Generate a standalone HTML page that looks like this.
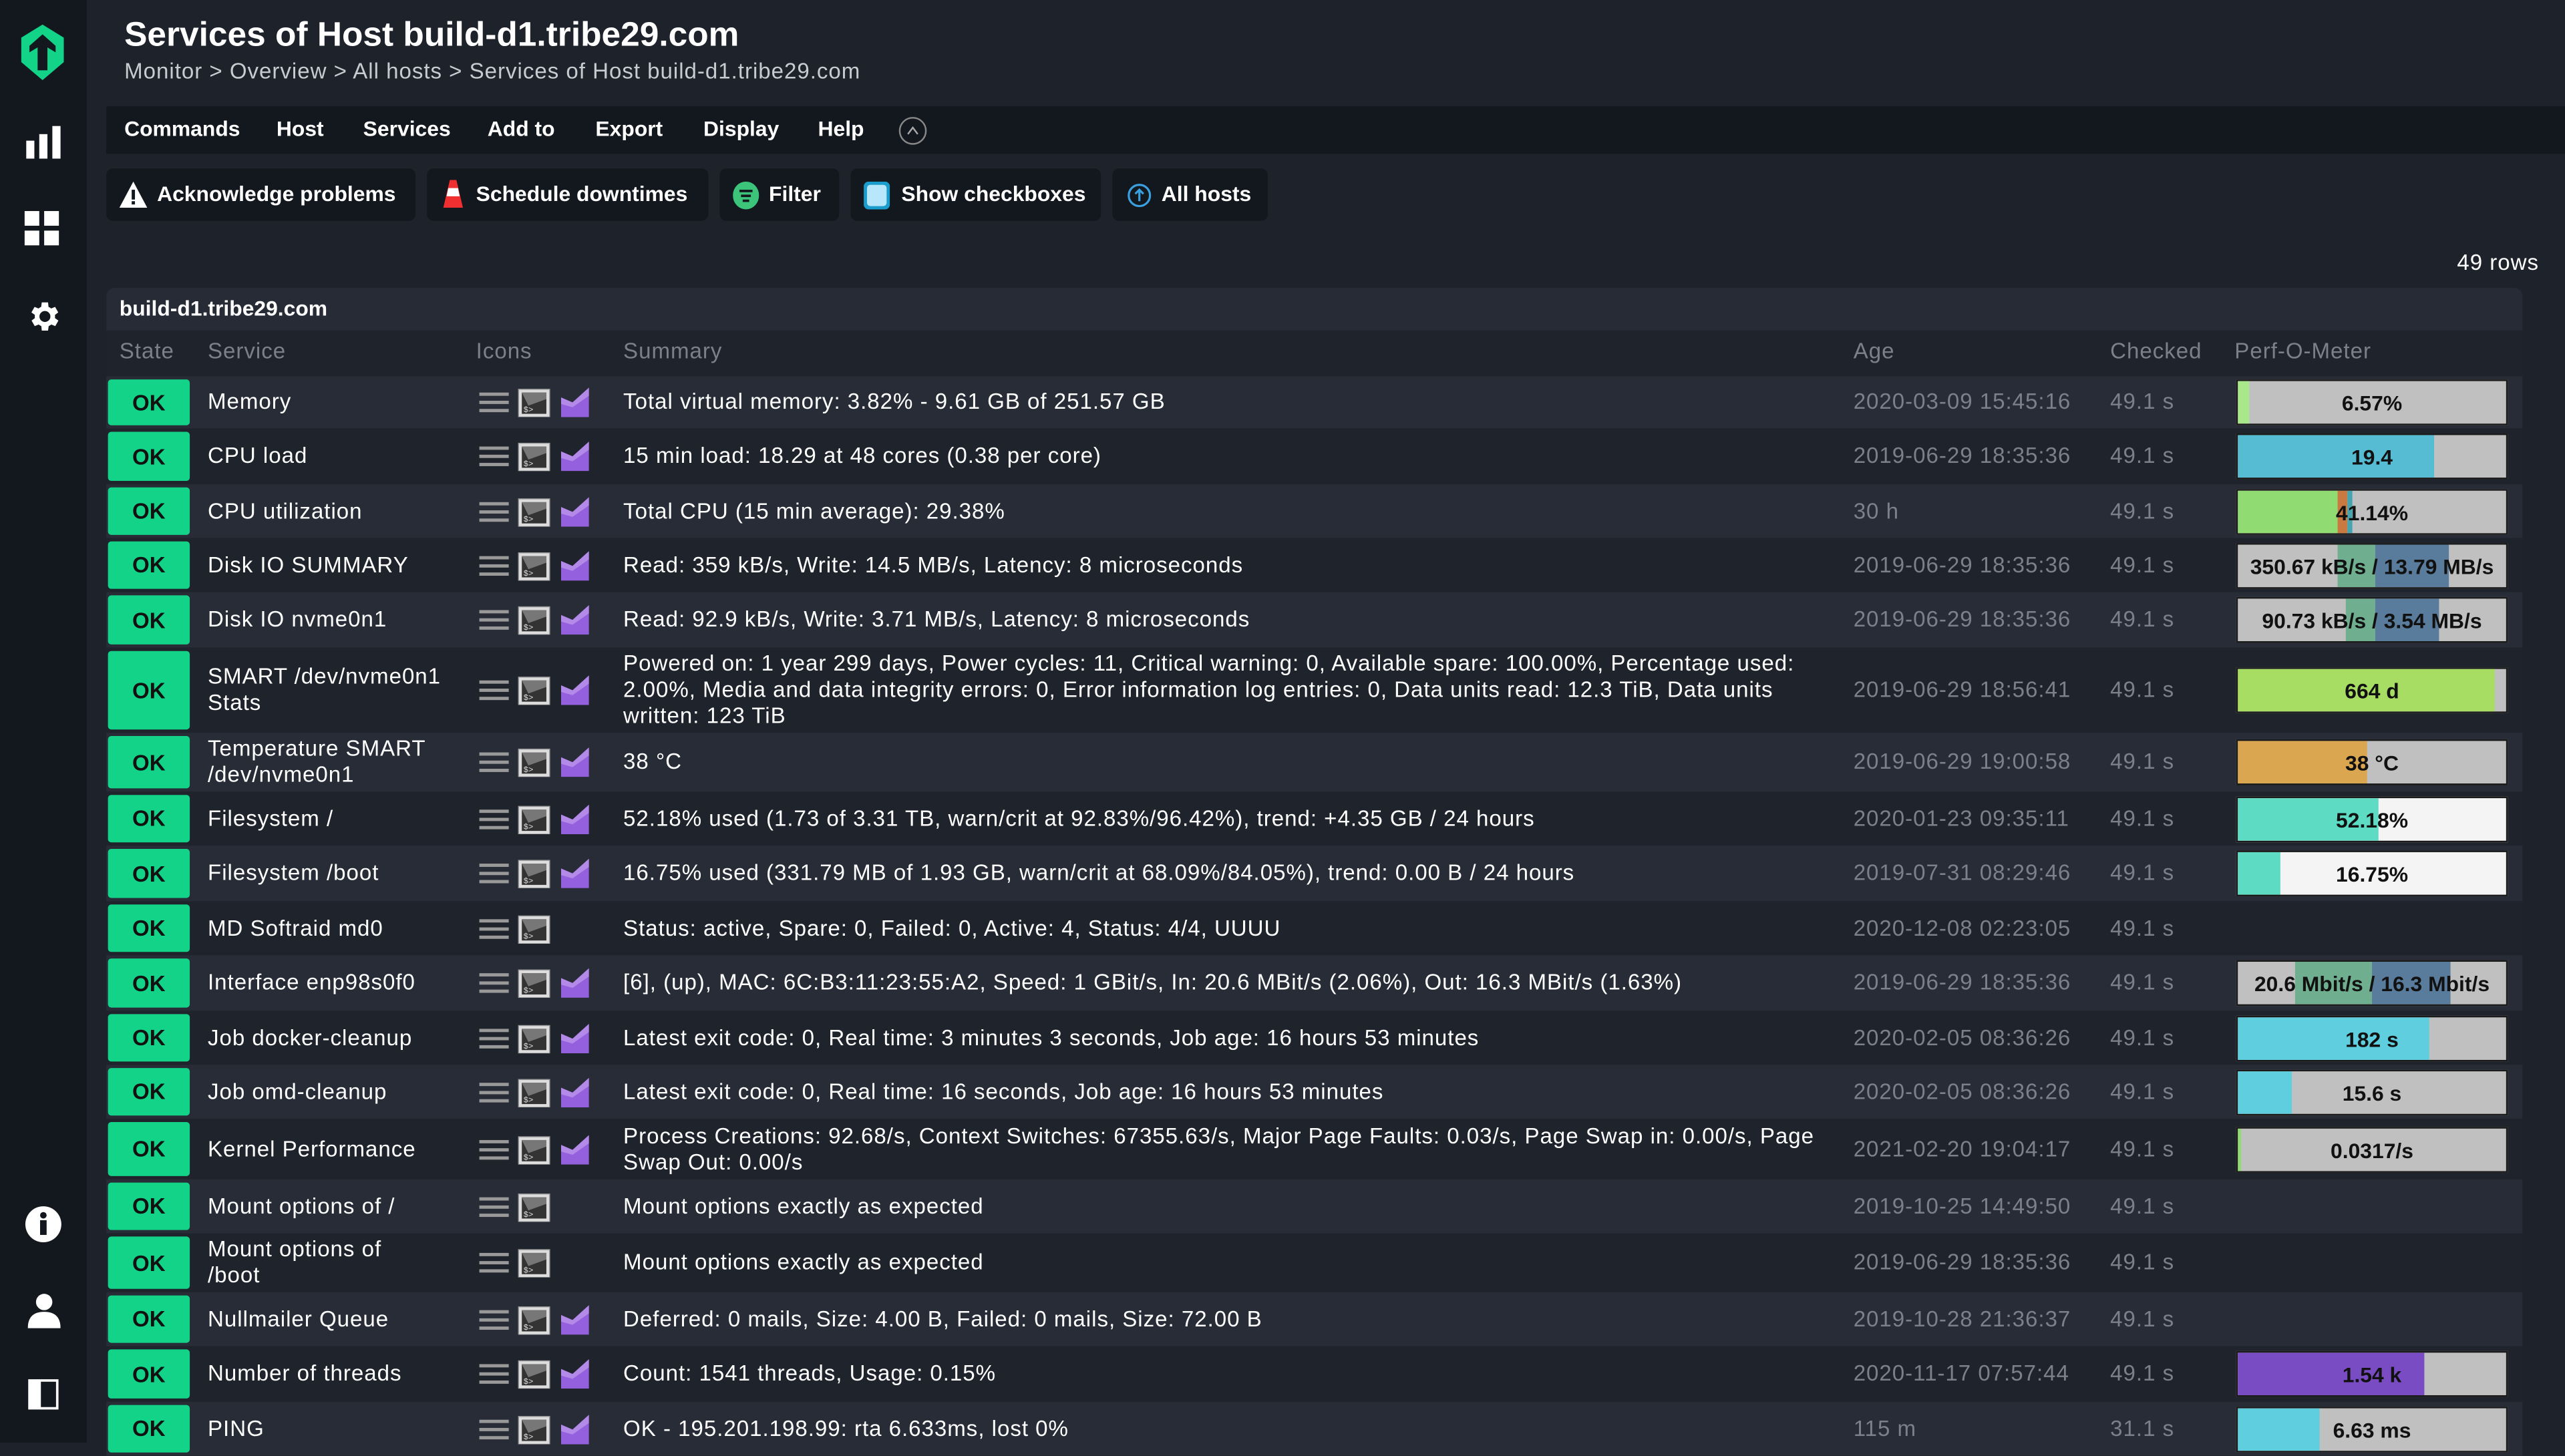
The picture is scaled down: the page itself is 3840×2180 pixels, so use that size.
<!DOCTYPE html>
<html><head><meta charset="utf-8"><style>
*{box-sizing:border-box;margin:0;padding:0}
html,body{width:3840px;height:2160px;overflow:hidden;background:#1e222a}
#w{position:absolute;left:0;top:0;width:1568px;height:882px;transform:scale(2.44898);transform-origin:0 0;font-family:"Liberation Sans",sans-serif;color:#fff;background:#1e222a;font-size:13px}
.a{position:absolute}
#side{left:0;top:0;width:53px;height:882px;background:#13171e}
.t{white-space:nowrap}
.sp{font-size:13.5px;letter-spacing:.4px}
.menu{left:65px;top:65px;width:1503px;height:29px;background:#13171e}
.menu span{position:absolute;top:6px;font-weight:bold;font-size:13px}
.btn{top:103px;height:32px;background:#13171e;border-radius:4px;font-weight:bold;font-size:13px}
.btn span{position:absolute;top:8px}
.row{left:65px;width:1477px}
.ok{position:absolute;left:1px;top:2px;bottom:2px;width:50px;background:#13d389;border-radius:2px;color:#111;font-weight:bold;display:flex;align-items:center;justify-content:center;font-size:13.5px}
.cell{position:absolute;top:0;bottom:0;display:flex;align-items:center;line-height:16px;font-size:13.5px;letter-spacing:.4px;white-space:nowrap}
.age{color:#7b808a}
.bar{position:absolute;left:1302px;width:166px;height:28px;background:#c0c0c0;border:1px solid #1a1a1a;overflow:hidden}
.bar div{position:absolute;top:0;bottom:0}
.bar b{position:absolute;left:0;right:0;top:6px;text-align:center;color:#111;font-size:13px;font-weight:bold;white-space:nowrap}
.ic{position:absolute;left:228px;top:50%;margin-top:-9px;width:68px;height:18px}
</style></head><body><div id="w">
<div id="side" class="a">
<svg class="a" style="left:12px;top:14px" width="28" height="36" viewBox="0 0 28 36"><path d="M14 1 L27 9 L27 24 L14 35 L1 24 L1 9Z" fill="#13d389"/><path d="M14 7 L22 14 L22 18 L17 15 L17 29 L11 29 L11 15 L6 18 L6 14Z" fill="#13171e"/></svg>
<svg class="a" style="left:16px;top:77px" width="22" height="20"><rect x="0" y="9" width="5" height="11" fill="#fff"/><rect x="8" y="5" width="5" height="15" fill="#fff"/><rect x="16" y="0" width="5" height="20" fill="#fff"/></svg>
<svg class="a" style="left:15px;top:129px" width="22" height="22"><rect x="0" y="0" width="9" height="9" fill="#fff"/><rect x="12" y="0" width="9" height="9" fill="#fff"/><rect x="0" y="12" width="9" height="9" fill="#fff"/><rect x="12" y="12" width="9" height="9" fill="#fff"/></svg>
<svg class="a" style="left:15px;top:182px" width="23" height="23" viewBox="0 0 24 24"><path fill="#fff" d="M19.4 13a7.5 7.5 0 0 0 0-2l2.1-1.6-2-3.5-2.5 1a7 7 0 0 0-1.7-1L15 3h-4l-.4 2.9a7 7 0 0 0-1.7 1l-2.5-1-2 3.5L6.6 11a7.5 7.5 0 0 0 0 2l-2.1 1.6 2 3.5 2.5-1a7 7 0 0 0 1.7 1L11 21h4l.4-2.9a7 7 0 0 0 1.7-1l2.5 1 2-3.5zM13 15.5a3.5 3.5 0 1 1 0-7 3.5 3.5 0 0 1 0 7z"/></svg>
<svg class="a" style="left:15px;top:737px" width="23" height="23"><circle cx="11.5" cy="11.5" r="11" fill="#fff"/><circle cx="11.5" cy="6" r="2" fill="#13171e"/><rect x="9.5" y="9" width="4" height="9" fill="#13171e"/></svg>
<svg class="a" style="left:17px;top:790px" width="20" height="23"><circle cx="10" cy="6" r="5" fill="#fff"/><path d="M0 22 Q0 12 10 12 Q20 12 20 22Z" fill="#fff"/></svg>
<svg class="a" style="left:17px;top:843px" width="19" height="19"><rect x="1" y="1" width="17" height="17" fill="none" stroke="#fff" stroke-width="1.5"/><rect x="1" y="1" width="7" height="17" fill="#fff"/></svg>
</div>
<div class="a t" style="left:76px;top:10px;font-size:21px;font-weight:bold">Services of Host build-d1.tribe29.com</div>
<div class="a t sp" style="left:76px;top:36px;color:#c8cbd0">Monitor &gt; Overview &gt; All hosts &gt; Services of Host build-d1.tribe29.com</div>
<div class="a menu"><span style="left:11px">Commands</span><span style="left:104px">Host</span><span style="left:157px">Services</span><span style="left:233px">Add to</span><span style="left:299px">Export</span><span style="left:365px">Display</span><span style="left:435px">Help</span>
<svg class="a" style="left:484px;top:6px" width="18" height="18"><circle cx="9" cy="9" r="8" fill="none" stroke="#888" stroke-width="1"/><path d="M6 11 L9 7 L12 11" fill="none" stroke="#aaa"/></svg></div>
<div class="a btn" style="left:65px;width:189px"><svg class="a" style="left:8px;top:8px" width="17" height="17"><path d="M8.5 0 L17 16 L0 16Z" fill="#fff"/><rect x="7.5" y="5" width="2" height="6" fill="#13171e"/><rect x="7.5" y="12" width="2" height="2" fill="#13171e"/></svg><span style="left:31px">Acknowledge problems</span></div>
<div class="a btn" style="left:261px;width:172px"><svg class="a" style="left:9px;top:7px" width="14" height="18"><path d="M5 0 L9 0 L13 17 L1 17Z" fill="#f03030"/><path d="M4 5 L10 5 L11 10 L3 10Z" fill="#fff"/></svg><span style="left:30px">Schedule downtimes</span></div>
<div class="a btn" style="left:440px;width:73px"><svg class="a" style="left:8px;top:8px" width="16" height="17"><ellipse cx="8" cy="8.5" rx="8" ry="8.5" fill="#3cc47a"/><rect x="4" y="5" width="8" height="1.5" fill="#13171e"/><rect x="5" y="8" width="6" height="1.5" fill="#13171e"/><rect x="6" y="11" width="4" height="1.5" fill="#13171e"/></svg><span style="left:30px">Filter</span></div>
<div class="a btn" style="left:520px;width:153px"><svg class="a" style="left:8px;top:8px" width="16" height="17"><rect x="0" y="0" width="16" height="17" rx="3" fill="#1a9ccc"/><rect x="2" y="2" width="12" height="13" rx="2" fill="#b8e6fa"/></svg><span style="left:31px">Show checkboxes</span></div>
<div class="a btn" style="left:680px;width:95px"><svg class="a" style="left:9px;top:9px" width="15" height="15"><circle cx="7.5" cy="7.5" r="6.5" fill="none" stroke="#3aa0e0" stroke-width="1.3"/><path d="M7.5 11 L7.5 4 M5 6.5 L7.5 4 L10 6.5" stroke="#3aa0e0" fill="none" stroke-width="1.3"/></svg><span style="left:30px">All hosts</span></div>
<div class="a t sp" style="left:1502px;top:153px">49 rows</div>
<div class="a" style="left:65px;top:176px;width:1477px;height:26px;background:#262b35;border-radius:5px 5px 0 0"></div>
<div class="a t" style="left:73px;top:181px;font-weight:bold;font-size:13px">build-d1.tribe29.com</div>
<div class="a" style="left:65px;top:202px;width:1477px;height:28px;background:#1f232b"></div>
<div class="a t sp" style="left:73px;top:207px;color:#7b808a">State</div>
<div class="a t sp" style="left:127px;top:207px;color:#7b808a">Service</div>
<div class="a t sp" style="left:291px;top:207px;color:#7b808a">Icons</div>
<div class="a t sp" style="left:381px;top:207px;color:#7b808a">Summary</div>
<div class="a t sp" style="left:1133px;top:207px;color:#7b808a">Age</div>
<div class="a t sp" style="left:1290px;top:207px;color:#7b808a">Checked</div>
<div class="a t sp" style="left:1366px;top:207px;color:#7b808a">Perf-O-Meter</div>
<div id="rows"></div>
</div>
<script>
var R=[
[230,32,"Memory","Total virtual memory: 3.82% - 9.61 GB of 251.57 GB","2020-03-09 15:45:16",1,[["#a8e88a",0,7]],"6.57%",0],
[262,34,"CPU load","15 min load: 18.29 at 48 cores (0.38 per core)","2019-06-29 18:35:36",1,[["#55bcd4",0,120]],"19.4",0],
[296,33,"CPU utilization","Total CPU (15 min average): 29.38%","30 h",1,[["#90dc73",0,61],["#c87a40",61,6],["#46a4b0",67,3]],"41.14%",0],
[329,33,"Disk IO SUMMARY","Read: 359 kB/s, Write: 14.5 MB/s, Latency: 8 microseconds","2019-06-29 18:35:36",1,[["#6fae8f",61,23],["#5a7c9c",84,45]],"350.67 kB/s / 13.79 MB/s",0],
[362,34,"Disk IO nvme0n1","Read: 92.9 kB/s, Write: 3.71 MB/s, Latency: 8 microseconds","2019-06-29 18:35:36",1,[["#6fae8f",66,18],["#5a7c9c",84,39]],"90.73 kB/s / 3.54 MB/s",0],
[396,52,"SMART /dev/nvme0n1<br>Stats","Powered on: 1 year 299 days, Power cycles: 11, Critical warning: 0, Available spare: 100.00%, Percentage used:<br>2.00%, Media and data integrity errors: 0, Error information log entries: 0, Data units read: 12.3 TiB, Data units<br>written: 123 TiB","2019-06-29 18:56:41",1,[["#a6dd62",0,157]],"664 d",0],
[448,36,"Temperature SMART<br>/dev/nvme0n1","38 °C","2019-06-29 19:00:58",1,[["#dba650",0,79]],"38 °C",0],
[484,33,"Filesystem /","52.18% used (1.73 of 3.31 TB, warn/crit at 92.83%/96.42%), trend: +4.35 GB / 24 hours","2020-01-23 09:35:11",1,[["#5ddcc3",0,86]],"52.18%",1],
[517,34,"Filesystem /boot","16.75% used (331.79 MB of 1.93 GB, warn/crit at 68.09%/84.05%), trend: 0.00 B / 24 hours","2019-07-31 08:29:46",1,[["#5ddcc3",0,26]],"16.75%",1],
[551,33,"MD Softraid md0","Status: active, Spare: 0, Failed: 0, Active: 4, Status: 4/4, UUUU","2020-12-08 02:23:05",0,null],
[584,34,"Interface enp98s0f0","[6], (up), MAC: 6C:B3:11:23:55:A2, Speed: 1 GBit/s, In: 20.6 MBit/s (2.06%), Out: 16.3 MBit/s (1.63%)","2019-06-29 18:35:36",1,[["#6fae8f",35,47],["#5a7c9c",82,48]],"20.6 Mbit/s / 16.3 Mbit/s",0],
[618,33,"Job docker-cleanup","Latest exit code: 0, Real time: 3 minutes 3 seconds, Job age: 16 hours 53 minutes","2020-02-05 08:36:26",1,[["#5fcfe0",0,117]],"182 s",0],
[651,33,"Job omd-cleanup","Latest exit code: 0, Real time: 16 seconds, Job age: 16 hours 53 minutes","2020-02-05 08:36:26",1,[["#5fcfe0",0,33]],"15.6 s",0],
[684,37,"Kernel Performance","Process Creations: 92.68/s, Context Switches: 67355.63/s, Major Page Faults: 0.03/s, Page Swap in: 0.00/s, Page<br>Swap Out: 0.00/s","2021-02-20 19:04:17",1,[["#90dc73",0,2]],"0.0317/s",0],
[721,33,"Mount options of /","Mount options exactly as expected","2019-10-25 14:49:50",0,null],
[754,36,"Mount options of<br>/boot","Mount options exactly as expected","2019-06-29 18:35:36",0,null],
[790,33,"Nullmailer Queue","Deferred: 0 mails, Size: 4.00 B, Failed: 0 mails, Size: 72.00 B","2019-10-28 21:36:37",1,null],
[823,34,"Number of threads","Count: 1541 threads, Usage: 0.15%","2020-11-17 07:57:44",1,[["#7a4cc4",0,114]],"1.54 k",0],
[857,33,"PING","OK - 195.201.198.99: rta 6.633ms, lost 0%","115 m",1,[["#5fcfe0",0,50]],"6.63 ms",0]
];
var h="";
R.forEach(function(r,i){
var bg=i%2==0?"#272c36":"#1f232b";
h+='<div class="a row" style="top:'+r[0]+'px;height:'+r[1]+'px;background:'+bg+'">';
h+='<div class="ok">OK</div>';
h+='<div class="cell" style="left:62px">'+r[2]+'</div>';
h+='<svg class="ic" viewBox="0 0 68 18"><rect x="0" y="3" width="18" height="2" fill="#999"/><rect x="0" y="8" width="18" height="2" fill="#999"/><rect x="0" y="13" width="18" height="2" fill="#999"/><rect x="24" y="1" width="19" height="17" fill="#ddd" stroke="#999" stroke-width=".6"/><rect x="26" y="3" width="15" height="13" fill="#333"/><path d="M26 3 L41 3 L41 7 L30 11Z" fill="#777"/><text x="27" y="15" font-size="5" fill="#ddd" font-family="Liberation Mono">$&gt;</text>'+(r[5]?'<path d="M50 18 L50 6 L57 9 L67 0 L67 18Z" fill="#9560dd"/><path d="M50 6 L57 9 L67 0 L67 5 L57 12 L50 10Z" fill="#b38ae8"/>':'')+'</svg>';
h+='<div class="cell" style="left:316px">'+r[3]+'</div>';
h+='<div class="cell age" style="left:1068px">'+r[4]+'</div>';
h+='<div class="cell age" style="left:1225px">'+(i==18?'31.1 s':'49.1 s')+'</div>';
if(r[6]){h+='<div class="bar" style="top:'+((r[1]-28)/2)+'px;'+(r[8]?'background:#f4f4f4':'')+'">';r[6].forEach(function(s){h+='<div style="background:'+s[0]+';left:'+s[1]+'px;width:'+s[2]+'px"></div>'});h+='<b>'+r[7]+'</b></div>';}
h+='</div>';});
document.getElementById("rows").innerHTML=h;
</script>
</body></html>
